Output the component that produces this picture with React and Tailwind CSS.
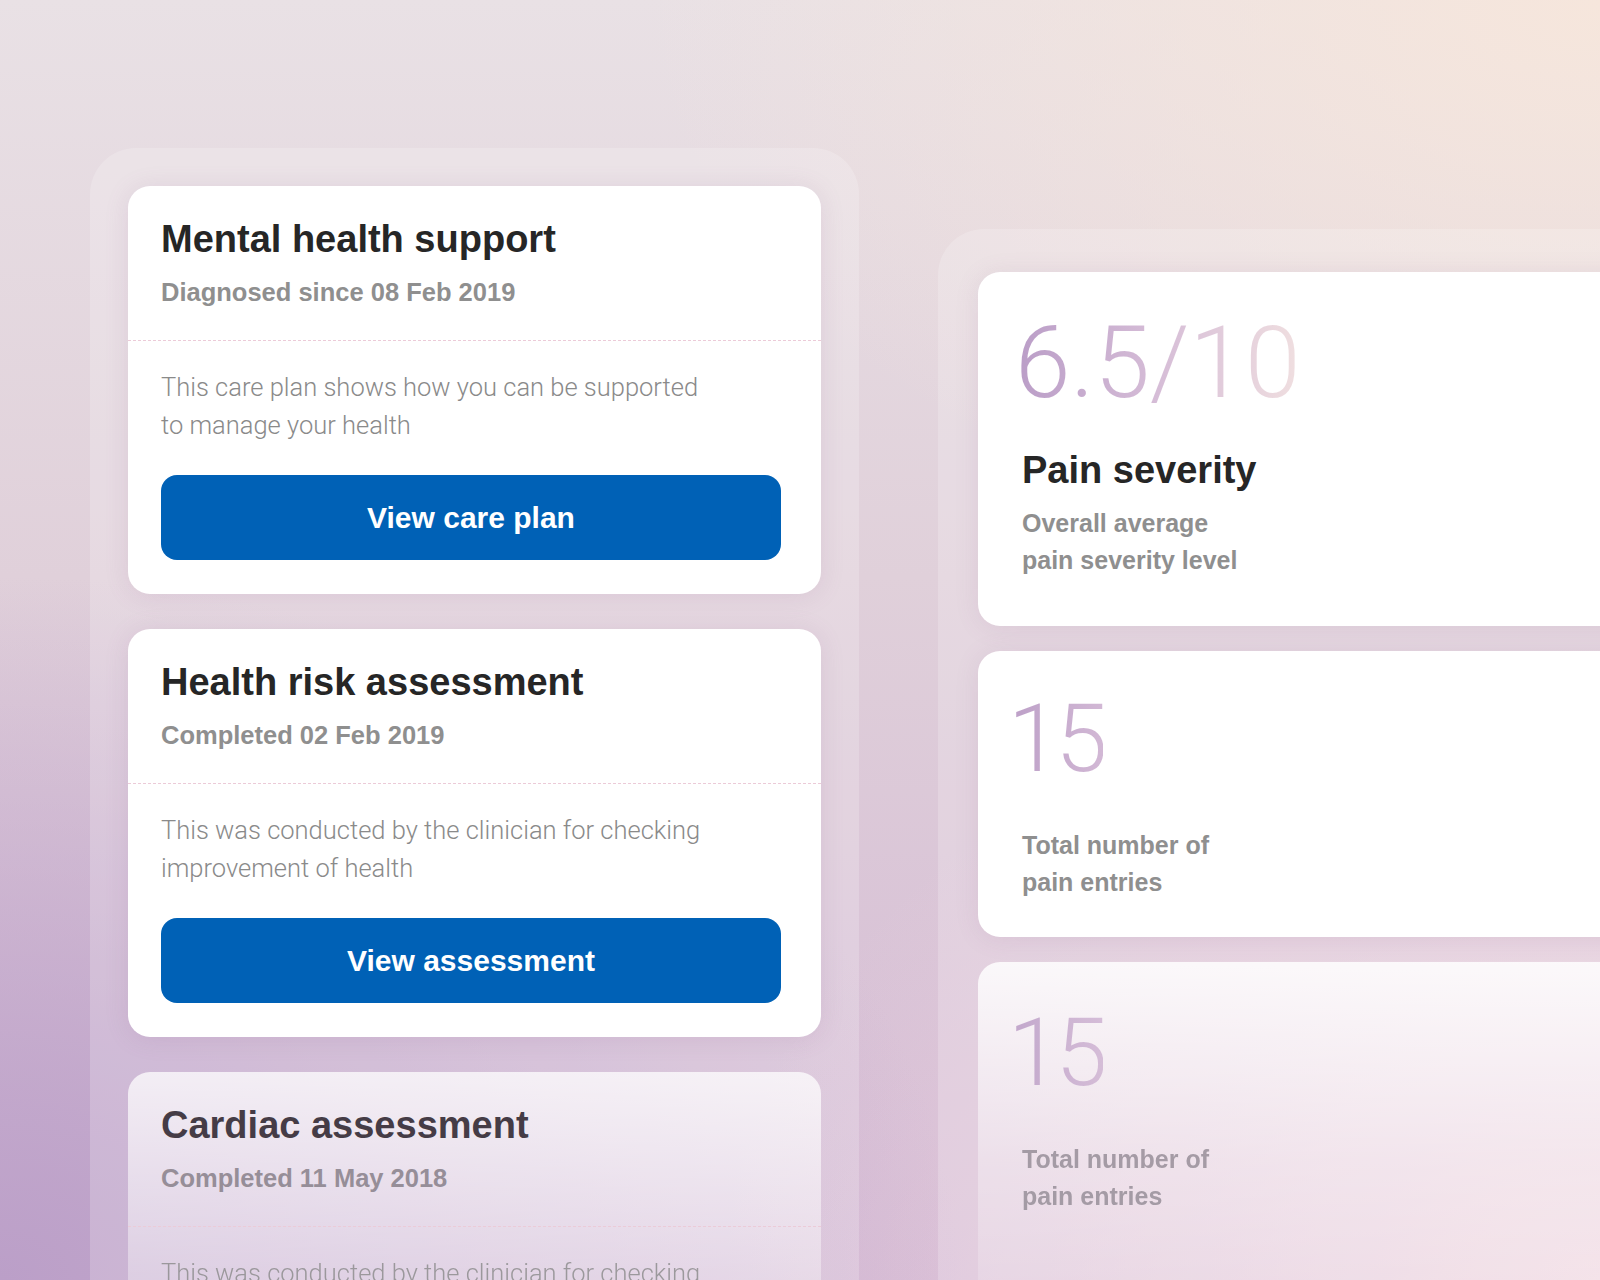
import React from "react";
import clsx from "clsx";

const heading = "font-['Liberation_Sans',Arial,sans-serif]";
const light = "font-['Roboto',sans-serif]";

const records = [
  {
    title: "Mental health support",
    subtitle: "Diagnosed since 08 Feb 2019",
    body: ["This care plan shows how you can be supported", "to manage your health"],
    action: "View care plan",
  },
  {
    title: "Health risk assessment",
    subtitle: "Completed 02 Feb 2019",
    body: ["This was conducted by the clinician for checking", "improvement of health"],
    action: "View assessment",
  },
  {
    title: "Cardiac assessment",
    subtitle: "Completed 11 May 2018",
    body: ["This was conducted by the clinician for checking", "improvement of health"],
    action: "View assessment",
    faded: true,
  },
];

const RecordCard = ({ title, subtitle, body, action, faded }) => (
  <div
    className={clsx(
      "shrink-0 rounded-[22px] pt-[30px] pb-[34px]",
      faded
        ? "bg-linear-to-b from-white/75 via-white/35 to-white/10"
        : "bg-white shadow-[0_2px_24px_rgba(140,90,140,0.14)]"
    )}
  >
    <div className="pl-[33px] pr-[40px]">
      <h2
        className={clsx(
          heading,
          "text-[38px] leading-[46px] font-bold",
          faded ? "text-[#453c46]" : "text-[#262626]"
        )}
      >
        {title}
      </h2>
      <p
        className={clsx(
          heading,
          "mt-[15px] text-[25.5px] leading-[30px] font-bold",
          faded ? "text-[#968e98]" : "text-[#8f8f8f]"
        )}
      >
        {subtitle}
      </p>
    </div>
    <div className="mt-[33px] border-t border-dashed border-[#eccbd8]" />
    <div className={clsx("pl-[33px] pr-[40px] pt-[27px]", faded && "opacity-80")}>
      <p className={`${light} text-[25.5px] leading-[38px] font-light text-[#8a8a8a]`}>
        {body[0]}
        <br />
        {body[1]}
      </p>
      <button
        className={`${heading} mt-[31px] h-[85px] w-[620px] rounded-[16px] bg-[#0061b6] text-[30px] font-bold text-white`}
      >
        {action}
      </button>
    </div>
  </div>
);

const StatCard = ({ value, title, lines, numberClass, className, faded }) => (
  <div
    className={clsx(
      "w-[720px] shrink-0 rounded-[22px] pl-[44px]",
      faded
        ? "bg-linear-to-b from-white/85 via-white/35 to-white/5"
        : "bg-white shadow-[0_2px_24px_rgba(140,90,140,0.12)]",
      className
    )}
  >
    <div className={clsx(faded && "opacity-90")}>
      <span
        className={clsx(
          light,
          "inline-block bg-clip-text leading-[100px] font-light text-transparent",
          numberClass
        )}
      >
        {value}
      </span>
      {title && (
        <h3 className={`${heading} mt-[34px] text-[38px] leading-[46px] font-bold text-[#262626]`}>{title}</h3>
      )}
      <p
        className={clsx(
          heading,
          "text-[25px] leading-[37px] font-bold",
          title ? "mt-[12px]" : "mt-[38px]",
          faded ? "text-[#9d949e]" : "text-[#8f8f8f]"
        )}
      >
        {lines[0]}
        <br />
        {lines[1]}
      </p>
    </div>
  </div>
);

const countClass =
  "-ml-[14px] text-[94px] tracking-[-0.05em] bg-linear-to-r from-[#bc9fc7] to-[#d2b8d5]";

export default function App() {
  return (
    <div className="h-[1280px] w-[1600px] overflow-hidden bg-[radial-gradient(ellipse_60%_45%_at_100%_0%,#f6e6dc_0%,rgba(246,230,220,0)_100%),radial-gradient(ellipse_55%_50%_at_100%_100%,#efd5df_0%,rgba(239,213,223,0)_100%),radial-gradient(ellipse_60%_55%_at_0%_100%,#bb9fc8_0%,rgba(187,159,200,0)_100%),linear-gradient(180deg,#e9e1e5_0%,#e0d0da_45%,#d3b9d4_100%)]">
      <div className="flex items-start pl-[90px]">
        {/* records column */}
        <div className="mt-[148px] flex h-[1200px] w-[769px] shrink-0 flex-col gap-[35px] rounded-t-[46px] bg-white/20 px-[38px] pt-[38px]">
          {records.map((r) => (
            <RecordCard key={r.title} {...r} />
          ))}
        </div>

        {/* pain stats column */}
        <div className="mt-[229px] ml-[79px] flex h-[1120px] w-[780px] shrink-0 flex-col rounded-tl-[46px] bg-white/20 pl-[40px] pt-[43px]">
          <StatCard
            value="6.5/10"
            title="Pain severity"
            lines={["Overall average", "pain severity level"]}
            numberClass="-ml-[7px] text-[100px] bg-linear-to-r from-[#ba9dc7] via-[#d6bdd7] to-[#f0dfe0]"
            className="pt-[41px] pb-[47px]"
          />
          <StatCard
            value="15"
            lines={["Total number of", "pain entries"]}
            numberClass={countClass}
            className="mt-[25px] pt-[38px] pb-[36px]"
          />
          <StatCard
            value="15"
            lines={["Total number of", "pain entries"]}
            numberClass={countClass}
            className="mt-[25px] h-[400px] pt-[41px]"
            faded
          />
        </div>
      </div>
    </div>
  );
}
